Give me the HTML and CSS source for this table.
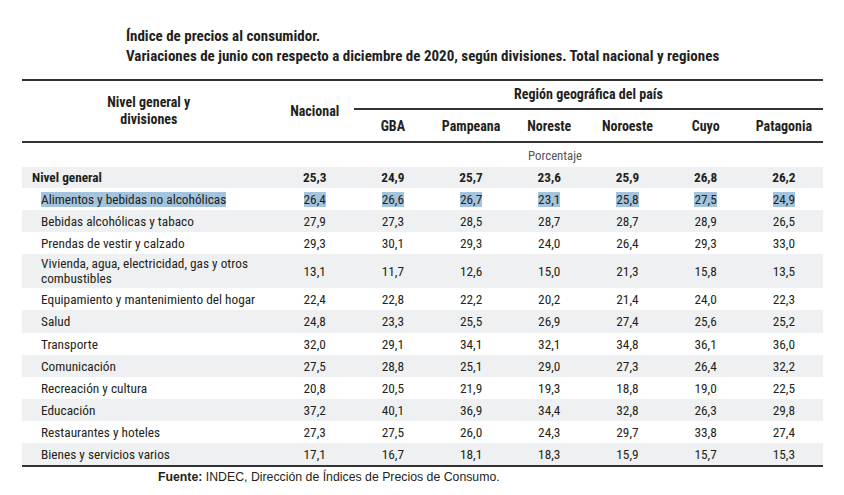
FILE: index.html
```html
<!DOCTYPE html>
<html lang="es">
<head>
<meta charset="utf-8">
<title>Índice de precios al consumidor</title>
<link rel="stylesheet" href="styles.css">
</head>
<body>
<div class="page">
  <header class="title">
    <div>Índice de precios al consumidor.</div>
    <div>Variaciones de junio con respecto a diciembre de 2020, según divisiones. Total nacional y regiones</div>
  </header>
  <table class="ipc">
    <colgroup>
      <col class="c-label"><col class="c-num"><col class="c-num"><col class="c-num"><col class="c-num"><col class="c-num"><col class="c-num"><col class="c-num">
    </colgroup>
    <thead>
      <tr class="h1">
        <th rowspan="2" class="h-label">Nivel general y<br>divisiones</th>
        <th rowspan="2">Nacional</th>
        <th colspan="6" class="h-region">Región geográfica del país</th>
      </tr>
      <tr class="h2">
        <th>GBA</th><th>Pampeana</th><th>Noreste</th><th>Noroeste</th><th>Cuyo</th><th>Patagonia</th>
      </tr>
    </thead>
    <tbody>
      <tr class="unit"><td colspan="8"><span>Porcentaje</span></td></tr>
      <tr class="gray total"><td>Nivel general</td><td>25,3</td><td>24,9</td><td>25,7</td><td>23,6</td><td>25,9</td><td>26,8</td><td>26,2</td></tr>
      <tr class="sel"><td><mark>Alimentos y bebidas no alcohólicas</mark></td><td><mark>26,4</mark></td><td><mark>26,6</mark></td><td><mark>26,7</mark></td><td><mark>23,1</mark></td><td><mark>25,8</mark></td><td><mark>27,5</mark></td><td><mark>24,9</mark></td></tr>
      <tr class="gray"><td>Bebidas alcohólicas y tabaco</td><td>27,9</td><td>27,3</td><td>28,5</td><td>28,7</td><td>28,7</td><td>28,9</td><td>26,5</td></tr>
      <tr><td>Prendas de vestir y calzado</td><td>29,3</td><td>30,1</td><td>29,3</td><td>24,0</td><td>26,4</td><td>29,3</td><td>33,0</td></tr>
      <tr class="gray tall"><td>Vivienda, agua, electricidad, gas y otros<br>combustibles</td><td>13,1</td><td>11,7</td><td>12,6</td><td>15,0</td><td>21,3</td><td>15,8</td><td>13,5</td></tr>
      <tr><td>Equipamiento y mantenimiento del hogar</td><td>22,4</td><td>22,8</td><td>22,2</td><td>20,2</td><td>21,4</td><td>24,0</td><td>22,3</td></tr>
      <tr class="gray wide"><td>Salud</td><td>24,8</td><td>23,3</td><td>25,5</td><td>26,9</td><td>27,4</td><td>25,6</td><td>25,2</td></tr>
      <tr><td>Transporte</td><td>32,0</td><td>29,1</td><td>34,1</td><td>32,1</td><td>34,8</td><td>36,1</td><td>36,0</td></tr>
      <tr class="gray"><td>Comunicación</td><td>27,5</td><td>28,8</td><td>25,1</td><td>29,0</td><td>27,3</td><td>26,4</td><td>32,2</td></tr>
      <tr><td>Recreación y cultura</td><td>20,8</td><td>20,5</td><td>21,9</td><td>19,3</td><td>18,8</td><td>19,0</td><td>22,5</td></tr>
      <tr class="gray"><td>Educación</td><td>37,2</td><td>40,1</td><td>36,9</td><td>34,4</td><td>32,8</td><td>26,3</td><td>29,8</td></tr>
      <tr><td>Restaurantes y hoteles</td><td>27,3</td><td>27,5</td><td>26,0</td><td>24,3</td><td>29,7</td><td>33,8</td><td>27,4</td></tr>
      <tr class="gray last"><td>Bienes y servicios varios</td><td>17,1</td><td>16,7</td><td>18,1</td><td>18,3</td><td>15,9</td><td>15,7</td><td>15,3</td></tr>
    </tbody>
  </table>
  <p class="source"><b>Fuente:</b> INDEC, Dirección de Índices de Precios de Consumo.</p>
</div>
</body>
</html>
```
FILE: styles.css
```css
html, body {
  margin: 0;
  padding: 0;
  background: #ffffff;
}

.page {
  width: 844px;
  height: 495px;
  overflow: hidden;
  color: #231f20;
  font-family: "Roboto Condensed", "Noto Sans", "Liberation Sans", sans-serif;
  font-stretch: condensed;
}

.title {
  padding: 26px 0 0 126px;
  font-weight: bold;
  font-size: 15px;
  line-height: 20px;
  white-space: nowrap;
}

.ipc {
  margin: 13px 0 0 22px;
  width: 801px;
  border-collapse: collapse;
  table-layout: fixed;
  font-size: 13.3px;
  white-space: nowrap;
}

.c-label { width: 253px; }
.c-num { width: 78px; }

.ipc th {
  font-weight: bold;
  font-size: 14px;
  text-align: center;
  padding: 0;
  line-height: 17px;
}

.ipc thead tr.h1 th {
  border-top: 2px solid #333;
}

.h1 { height: 29px; }
.h2 { height: 33px; }

.ipc thead tr.h2 th {
  border-bottom: 2px solid #333;
  vertical-align: middle;
  padding-top: 2px;
}

.ipc thead th[rowspan] {
  border-bottom: 2px solid #333;
}

.h-region {
  border-bottom: 2px solid #333;
  padding-top: 1px;
}

.ipc td {
  padding: 0;
  text-align: center;
  height: 22px;
  line-height: 15px;
  vertical-align: middle;
}

.ipc td:first-child {
  text-align: left;
  padding-left: 19px;
}

.unit td {
  height: 24px;
  color: #555;
  font-size: 12.8px;
}

.ipc .unit td:first-child {
  padding-left: 506px;
}

.gray td {
  background: #eff0f1;
}

.total td {
  font-weight: bold;
  height: 21px;
}

.ipc .total td:first-child {
  padding-left: 10px;
}

.tall td {
  height: 34px;
}

.wide td {
  height: 23px;
}

.last td {
  border-bottom: 2px solid #333;
}

mark {
  background: #a4c3dc;
  color: inherit;
}

.source {
  margin: 3px 0 0 158px;
  font-family: "Liberation Sans", Arial, sans-serif;
  font-stretch: normal;
  font-size: 12.3px;
  line-height: 15px;
}
```
